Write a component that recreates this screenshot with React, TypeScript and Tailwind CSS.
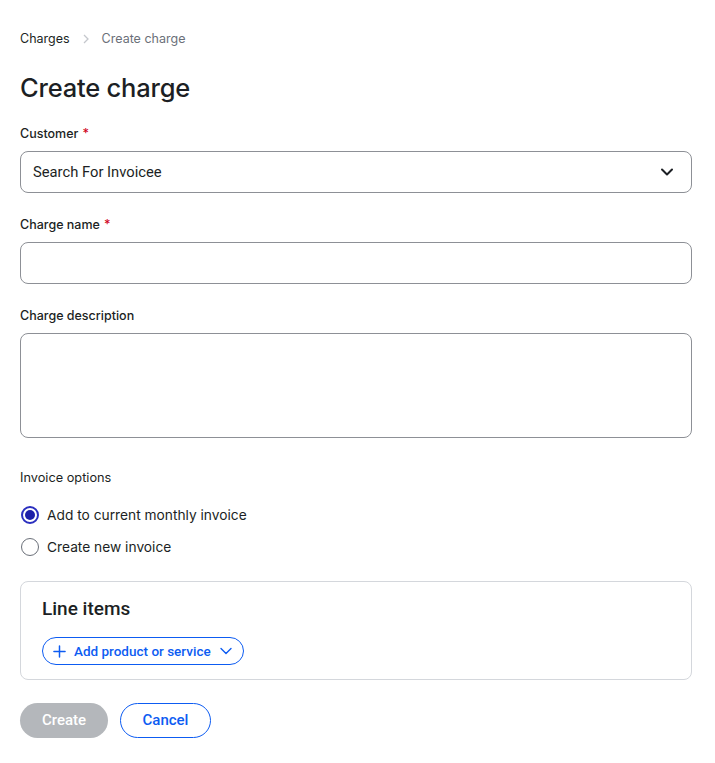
import type { FC } from 'react';

const Label: FC<{ text: string; required?: boolean }> = ({ text, required }) => (
  <div className="text-[12.5px] font-medium text-[#1c1f24] leading-4 mb-[9px]">
    {text}
    {required && <span className="text-[#d0021b] ml-1">*</span>}
  </div>
);

const App: FC = () => {
  return (
    <div className="min-h-screen bg-white pl-5 pr-[23px] pt-[31px] font-['Inter',sans-serif] text-[#1c1f24]">
      {/* Breadcrumb */}
      <nav className="flex items-center text-[12.5px] leading-4 h-4">
        <span className="text-[#1c1f24]">Charges</span>
        <svg className="mx-[10px] h-3 w-3 text-[#c4c7cc]" viewBox="0 0 12 12" fill="none" stroke="currentColor" strokeWidth="1.3">
          <path d="M4 2l4 4-4 4" />
        </svg>
        <span className="text-[#6b7079]">Create charge</span>
      </nav>

      <h1 className="mt-[25px] text-[25.5px] font-medium leading-8 tracking-[-0.2px]">Create charge</h1>

      <div className="mt-[22px]">
        <Label text="Customer" required />
        <button className="flex h-[42px] w-full items-center justify-between rounded-lg border border-[#8d9096] px-3 font-['Roboto',sans-serif] text-[14.75px] text-[#1c1f24]">
          <span>Search For Invoicee</span>
          <svg className="h-4 w-4 mr-1" viewBox="0 0 16 16" fill="none" stroke="currentColor" strokeWidth="2" strokeLinecap="round" strokeLinejoin="round">
            <path d="M3 5.5l5 5 5-5" />
          </svg>
        </button>
      </div>

      <div className="mt-[24px]">
        <Label text="Charge name" required />
        <input className="block h-[42px] w-full rounded-lg border border-[#8d9096] px-3 outline-none" />
      </div>

      <div className="mt-[24px]">
        <Label text="Charge description" />
        <textarea className="block h-[105px] w-full resize-none rounded-lg border border-[#8d9096] px-3 outline-none" />
      </div>

      <div className="mt-[32px]">
        <div className="text-[12.75px] leading-4 text-[#1c1f24]">Invoice options</div>
        <div className="mt-[20px] flex flex-col gap-[14px]">
          <label className="flex items-center gap-2 text-[13.75px] leading-[18px]">
            <span className="flex h-[18px] w-[18px] items-center justify-center rounded-full border-2 border-[#2a2fbf] ml-px">
              <span className="h-[10px] w-[10px] rounded-full bg-[#1d1fa8]" />
            </span>
            Add to current monthly invoice
          </label>
          <label className="flex items-center gap-2 text-[13.75px] leading-[18px]">
            <span className="h-[18px] w-[18px] rounded-full border border-[#6b7079] ml-px" />
            Create new invoice
          </label>
        </div>
      </div>

      <div className="mt-[25px] rounded-lg border border-[#d4d7dc] px-[21px] pt-[15px] pb-[14px]">
        <h2 className="font-['Roboto',sans-serif] text-[19px] font-medium leading-6">Line items</h2>
        <button className="mt-[16px] flex h-[28px] items-center gap-2 rounded-full border border-[#0d5cf2] pl-[10px] pr-[10px] font-['Roboto',sans-serif] text-[13.5px] font-medium text-[#0d5cf2]">
          <svg className="h-[13px] w-[13px]" viewBox="0 0 14 14" fill="none" stroke="currentColor" strokeWidth="1.6" strokeLinecap="round">
            <path d="M7 1v12M1 7h12" />
          </svg>
          Add product or service
          <svg className="h-[14px] w-[14px]" viewBox="0 0 14 14" fill="none" stroke="currentColor" strokeWidth="1.4" strokeLinecap="round" strokeLinejoin="round">
            <path d="M2 4.5l5 5 5-5" />
          </svg>
        </button>
      </div>

      <div className="mt-[23px] flex gap-3">
        <button className="h-[35px] w-[88px] rounded-full bg-[#b4b7bb] font-['Roboto',sans-serif] text-[15px] font-medium text-white">Create</button>
        <button className="h-[35px] w-[91px] rounded-full border border-[#0d5cf2] font-['Roboto',sans-serif] text-[15px] font-medium text-[#0d5cf2]">Cancel</button>
      </div>
    </div>
  );
};

export default App;
